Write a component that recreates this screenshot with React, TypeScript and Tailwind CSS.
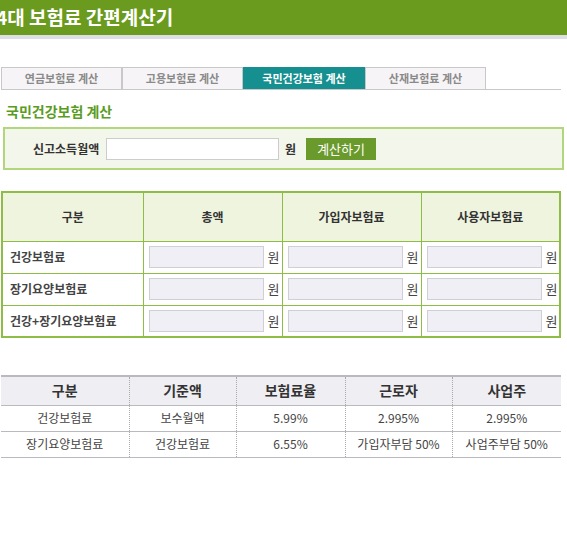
import React from 'react';

const font = { fontFamily: '"Noto Sans CJK KR", "Noto Sans", sans-serif' };

const tabs = ['연금보험료 계산', '고용보험료 계산', '국민건강보험 계산', '산재보험료 계산'];

const resultRows = ['건강보험료', '장기요양보험료', '건강+장기요양보험료'];

const rateRows = [
  ['건강보험료', '보수월액', '5.99%', '2.995%', '2.995%'],
  ['장기요양보험료', '건강보험료', '6.55%', '가입자부담 50%', '사업주부담 50%'],
];

function AmountCell() {
  return (
    <td className="border border-[#8dbd45] pl-[5px] pr-[2px]">
      <div className="flex items-center gap-[4px]">
        <div className="h-[22px] w-[115px] shrink-0 border border-[#cfcfd6] bg-[#f1eff6]" />
        <span className="text-[13px] text-[#444]">원</span>
      </div>
    </td>
  );
}

export default function App() {
  return (
    <div className="h-[550px] w-[567px] overflow-hidden bg-white" style={font}>
      <header>
        <div className="flex h-[35px] items-center bg-[#6b9b1e]">
          <h1 className="-ml-[4px] whitespace-nowrap text-[19px] font-bold text-white">4대 보험료 간편계산기</h1>
        </div>
        <div className="h-[4px] bg-[#dddde6]" />
      </header>

      <div className="ml-[1px] mt-[28px] flex w-[560px] border-b border-[#c8c8c8]">
        {tabs.map((t, i) => (
          <div
            key={t}
            className={
              i === 2
                ? 'flex h-[22px] w-[122px] items-center justify-center bg-[#168f90] text-[11px] font-bold text-white'
                : 'flex h-[22px] w-[121px] items-center justify-center border border-b-0 border-[#c8c8c8] bg-[#f6f4f6] text-[11px] font-bold text-[#8a8a8a]'
            }
          >
            {t}
          </div>
        ))}
      </div>

      <h2 className="ml-[6px] mt-[11px] text-[14px] font-bold text-[#5a9c22]">국민건강보험 계산</h2>

      <div className="mx-[3px] mt-[5px] flex h-[43px] items-center border-2 border-[#b2d67c] bg-[#f3f6ea] pl-[28px]">
        <span className="w-[73px] text-[12px] font-bold text-[#333]">신고소득월액</span>
        <div className="h-[22px] w-[173px] border border-[#cccccc] bg-white" />
        <span className="ml-[6px] text-[12px] font-bold text-[#333]">원</span>
        <button className="ml-[10px] h-[22px] w-[70px] bg-[#6a9a2b] text-[13px] text-white">계산하기</button>
      </div>

      <table className="ml-[1px] mt-[21px] w-[560px] table-fixed border-collapse border-2 border-[#8dbd45] text-[12px]">
        <colgroup>
          <col className="w-[141px]" />
          <col className="w-[139px]" />
          <col className="w-[139px]" />
          <col />
        </colgroup>
        <thead>
          <tr className="h-[49px] bg-[#eff4de]">
            <th className="border border-[#8dbd45] font-bold text-[#333]">구분</th>
            <th className="border border-[#8dbd45] font-bold text-[#333]">총액</th>
            <th className="border border-[#8dbd45] font-bold text-[#333]">가입자보험료</th>
            <th className="border border-[#8dbd45] font-bold text-[#333]">사용자보험료</th>
          </tr>
        </thead>
        <tbody>
          {resultRows.map((r) => (
            <tr key={r} className="h-[32px]">
              <td className="border border-[#8dbd45] pl-[7px] text-left text-[12px] font-bold text-[#444]">{r}</td>
              <AmountCell />
              <AmountCell />
              <AmountCell />
            </tr>
          ))}
        </tbody>
      </table>

      <table className="ml-[1px] mt-[37px] w-[560px] table-fixed border-collapse text-center">
        <colgroup>
          <col className="w-[128px]" />
          <col className="w-[107px]" />
          <col className="w-[109px]" />
          <col className="w-[107px]" />
          <col />
        </colgroup>
        <thead>
          <tr className="h-[29px] border-t-2 border-b border-[#b9b9c2] bg-[#efeef3] text-[14px] text-[#333]">
            <th className="border-r border-dotted border-[#aaaaaa] font-bold">구분</th>
            <th className="border-r border-dotted border-[#aaaaaa] font-bold">기준액</th>
            <th className="border-r border-dotted border-[#aaaaaa] font-bold">보험료율</th>
            <th className="border-r border-dotted border-[#aaaaaa] font-bold">근로자</th>
            <th className="font-bold">사업주</th>
          </tr>
        </thead>
        <tbody>
          {rateRows.map((row) => (
            <tr key={row[0]} className="h-[26px] border-b border-[#b9b9c2] text-[12px] text-[#444]">
              {row.map((c, i) => (
                <td key={i} className={i < 4 ? 'border-r border-dotted border-[#aaaaaa]' : ''}>
                  {c}
                </td>
              ))}
            </tr>
          ))}
        </tbody>
      </table>
    </div>
  );
}
